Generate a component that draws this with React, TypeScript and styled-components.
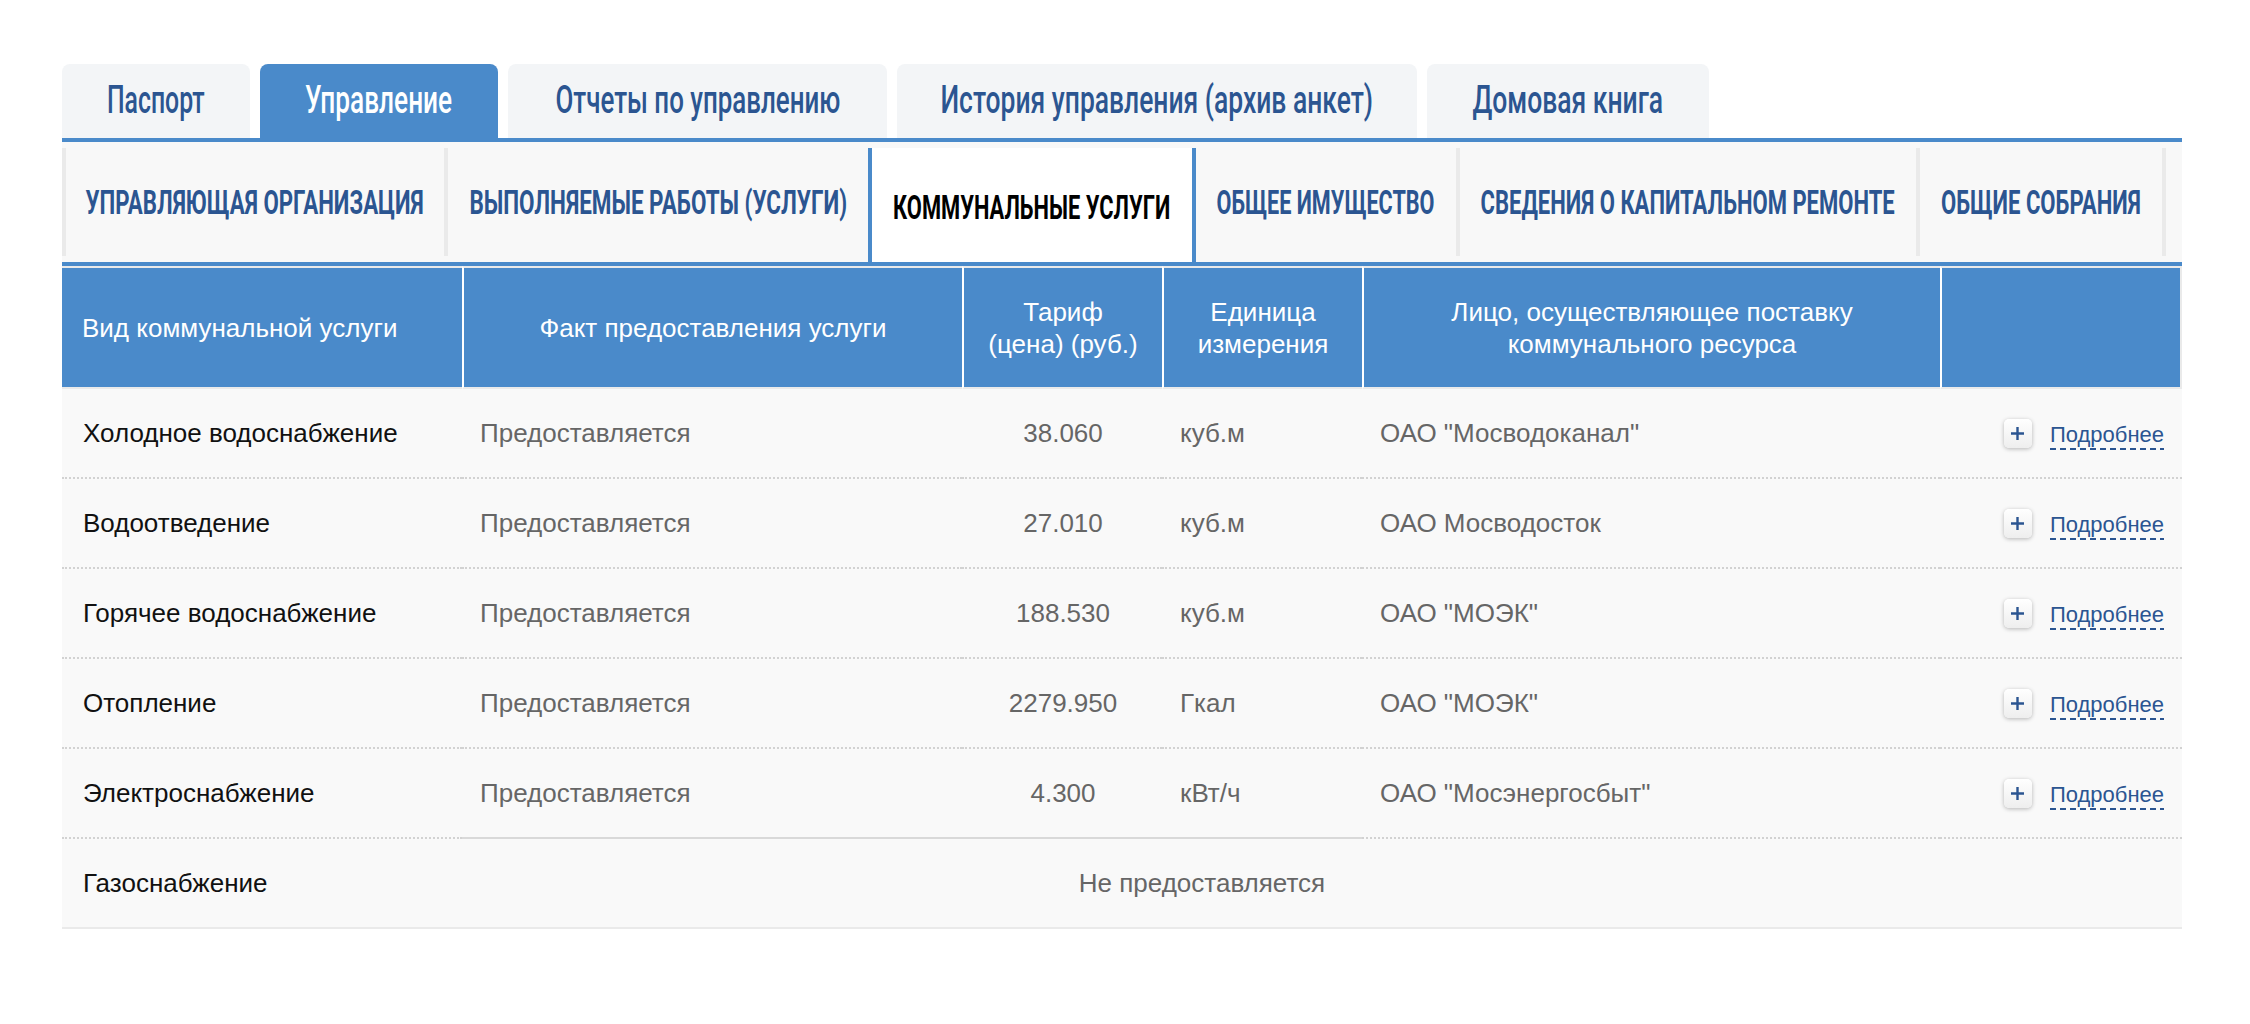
import { ReactNode, useLayoutEffect, useRef, useState } from 'react'
import styled, { createGlobalStyle } from 'styled-components'

const COLORS = {
  blue: '#4a8aca',
  dark: '#2b5591',
  tabBg: '#f3f5f7',
  subBg: '#f8f8f8',
  rowBg: '#f9f9f9',
  line: '#eaeaea',
  gray: '#666666',
}

const GlobalStyle = createGlobalStyle`
  body {
    margin: 0;
    background: #ffffff;
    font-family: "Liberation Sans", Arial, sans-serif;
  }
`

// squeezes a label to the width the condensed font takes in the design
const FitText = ({ width, children }: { width: number; children: ReactNode }) => {
  const ref = useRef<HTMLSpanElement>(null)
  const [scale, setScale] = useState(1)

  useLayoutEffect(() => {
    const measure = () => {
      if (ref.current) setScale(width / ref.current.offsetWidth)
    }
    measure()
    document.fonts?.ready.then(measure)
  }, [width])

  return (
    <Label ref={ref} style={{ transform: `scaleX(${scale})` }}>
      {children}
    </Label>
  )
}

const topTabs = [
  { title: 'Паспорт', width: 188, text: 98 },
  { title: 'Управление', width: 238, text: 147, active: true },
  { title: 'Отчеты по управлению', width: 379, text: 285 },
  { title: 'История управления (архив анкет)', width: 520, text: 433 },
  { title: 'Домовая книга', width: 282, text: 191 },
]

const subTabs = [
  { title: 'Управляющая организация', width: 382, text: 338 },
  { title: 'Выполняемые работы (услуги)', width: 424, text: 378 },
  { title: 'Коммунальные услуги', width: 328, text: 277, active: true },
  { title: 'Общее имущество', width: 260, text: 218 },
  { title: 'Сведения о капитальном ремонте', width: 460, text: 414 },
  { title: 'Общие собрания', width: 246, text: 200 },
]

const services = [
  { name: 'Холодное водоснабжение', tariff: '38.060', unit: 'куб.м', supplier: 'ОАО "Мосводоканал"' },
  { name: 'Водоотведение', tariff: '27.010', unit: 'куб.м', supplier: 'ОАО Мосводосток' },
  { name: 'Горячее водоснабжение', tariff: '188.530', unit: 'куб.м', supplier: 'ОАО "МОЭК"' },
  { name: 'Отопление', tariff: '2279.950', unit: 'Гкал', supplier: 'ОАО "МОЭК"' },
  { name: 'Электроснабжение', tariff: '4.300', unit: 'кВт/ч', supplier: 'ОАО "Мосэнергосбыт"' },
]

const PlusIcon = () => (
  <svg width="15" height="15" viewBox="0 0 15 15">
    <path d="M7.5 1v13M1 7.5h13" stroke={COLORS.dark} strokeWidth="2.4" />
  </svg>
)

const App = () => {
  return (
    <Page>
      <GlobalStyle />
      <TopTabs>
        {topTabs.map((tab) => (
          <TopTab key={tab.title} $width={tab.width} className={tab.active ? 'active' : ''}>
            <FitText width={tab.text}>{tab.title}</FitText>
          </TopTab>
        ))}
      </TopTabs>

      <SubTabs>
        {subTabs.map((tab, i) => (
          <SubTab
            key={tab.title}
            $width={tab.width}
            $afterActive={!!subTabs[i - 1]?.active}
            className={tab.active ? 'active' : ''}
          >
            <FitText width={tab.text}>{tab.title}</FitText>
          </SubTab>
        ))}
        <SubTab $width={20} $afterActive={false} />
      </SubTabs>

      <Table>
        <colgroup>
          <col style={{ width: 400 }} />
          <col style={{ width: 500 }} />
          <col style={{ width: 200 }} />
          <col style={{ width: 200 }} />
          <col style={{ width: 578 }} />
          <col style={{ width: 242 }} />
        </colgroup>
        <thead>
          <tr>
            <Th $align="left">Вид коммунальной услуги</Th>
            <Th>Факт предоставления услуги</Th>
            <Th>
              Тариф
              <br />
              (цена) (руб.)
            </Th>
            <Th>
              Единица
              <br />
              измерения
            </Th>
            <Th>
              Лицо, осуществляющее поставку
              <br />
              коммунального ресурса
            </Th>
            <Th />
          </tr>
        </thead>
        <tbody>
          {services.map((row, i) => {
            const solid = i === services.length - 1
            return (
              <tr key={row.name}>
                <Td $first>{row.name}</Td>
                <Td $muted $solid={solid}>
                  Предоставляется
                </Td>
                <Td $muted $solid={solid} $align="center">
                  {row.tariff}
                </Td>
                <Td $muted $solid={solid}>
                  {row.unit}
                </Td>
                <Td $muted>{row.supplier}</Td>
                <Td>
                  <Actions>
                    <PlusButton>
                      <PlusIcon />
                    </PlusButton>
                    <MoreLink>Подробнее</MoreLink>
                  </Actions>
                </Td>
              </tr>
            )
          })}
          <tr>
            <Td $first $last>
              Газоснабжение
            </Td>
            <Td $muted $last $align="center" colSpan={4}>
              Не предоставляется
            </Td>
            <Td $last />
          </tr>
        </tbody>
      </Table>
    </Page>
  )
}

const Page = styled.div`
  width: 2120px;
  padding: 64px 0 60px 62px;
`

const Label = styled.span`
  display: inline-block;
  white-space: nowrap;
  transform-origin: center;
`

const TopTabs = styled.div`
  display: flex;
  align-items: flex-end;
  gap: 10px;
  border-bottom: 4px solid ${COLORS.blue};
`

const TopTab = styled.div<{ $width: number }>`
  width: ${(p) => p.$width}px;
  height: 74px;
  display: flex;
  align-items: center;
  justify-content: center;
  padding-bottom: 2px;
  box-sizing: border-box;
  border-radius: 8px 8px 0 0;
  background-color: ${COLORS.tabBg};
  color: ${COLORS.dark};
  font-family: Roboto, "Liberation Sans", sans-serif;
  font-weight: 500;
  font-size: 38px;
  cursor: pointer;

  &.active {
    background-color: ${COLORS.blue};
    color: #ffffff;
  }
`

const SubTabs = styled.div`
  display: flex;
  align-items: flex-start;
  overflow: hidden;
  padding-top: 6px;
  background-color: ${COLORS.subBg};
  border-bottom: 4px solid ${COLORS.blue};
`

const SubTab = styled.div<{ $width: number; $afterActive: boolean }>`
  flex: none;
  width: ${(p) => p.$width}px;
  height: 108px;
  margin-bottom: 6px;
  box-sizing: border-box;
  display: flex;
  align-items: center;
  justify-content: center;
  border-left: ${(p) => (p.$afterActive ? 'none' : `4px solid ${COLORS.line}`)};
  color: ${COLORS.dark};
  font-family: Roboto, "Liberation Sans", sans-serif;
  font-weight: 700;
  font-size: 34px;
  text-transform: uppercase;
  cursor: pointer;

  &.active {
    position: relative;
    z-index: 1;
    height: 118px;
    margin-bottom: -4px;
    background-color: #ffffff;
    border-left: 4px solid ${COLORS.blue};
    border-right: 4px solid ${COLORS.blue};
    color: #000000;
  }
`

const Table = styled.table`
  width: 2120px;
  table-layout: fixed;
  border-collapse: separate;
  border-spacing: 0;
  font-size: 26px;
`

const Th = styled.th<{ $align?: 'left' | 'center' }>`
  height: 119px;
  padding: 0 20px;
  background-color: ${COLORS.blue};
  color: #ffffff;
  font-weight: 400;
  line-height: 32px;
  text-align: ${(p) => p.$align ?? 'center'};
  border-top: 2px solid ${COLORS.line};
  border-bottom: 2px solid ${COLORS.line};
  border-left: 2px solid #ffffff;

  &:first-child {
    border-left: none;
  }
  &:last-child {
    border-right: 2px solid ${COLORS.line};
  }
`

const Td = styled.td<{
  $first?: boolean
  $muted?: boolean
  $solid?: boolean
  $last?: boolean
  $align?: 'left' | 'center'
}>`
  height: 88px;
  padding: 0 16px 0 ${(p) => (p.$first ? 21 : 18)}px;
  background-color: ${COLORS.rowBg};
  color: ${(p) => (p.$muted ? COLORS.gray : '#111111')};
  text-align: ${(p) => p.$align ?? 'left'};
  white-space: nowrap;
  border-bottom: 2px
    ${(p) => (p.$last ? `solid ${COLORS.line}` : p.$solid ? 'solid #d9d9d9' : 'dotted #d2d2d2')};
`

const Actions = styled.div`
  display: flex;
  align-items: center;
  justify-content: flex-end;
  gap: 18px;
  padding-right: 2px;
`

const PlusButton = styled.span`
  width: 28px;
  height: 29px;
  display: flex;
  align-items: center;
  justify-content: center;
  border-radius: 5px;
  background: linear-gradient(#ffffff, #eeeeee);
  box-shadow: 0 1px 4px rgba(0, 0, 0, 0.28);
  cursor: pointer;
`

const MoreLink = styled.a`
  display: inline-block;
  margin-top: 6px;
  padding-bottom: 3px;
  color: ${COLORS.dark};
  font-size: 22px;
  line-height: 24px;
  cursor: pointer;
  background-image: repeating-linear-gradient(
    to right,
    ${COLORS.dark} 0 6px,
    transparent 6px 10px
  );
  background-size: 100% 2px;
  background-repeat: no-repeat;
  background-position: left bottom;
`

export default App
